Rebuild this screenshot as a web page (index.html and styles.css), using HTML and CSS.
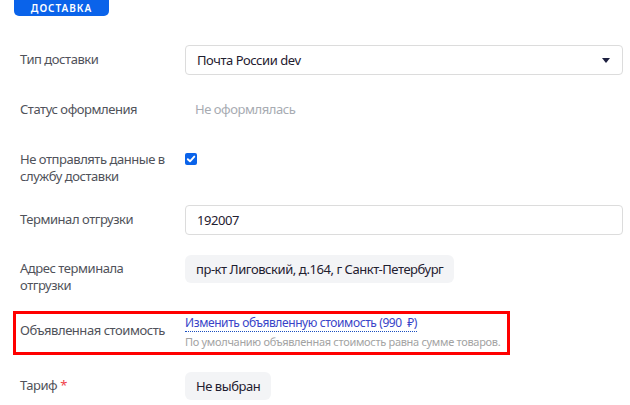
FILE: index.html
```html
<!DOCTYPE html>
<html>
  <head>
    <title>Доставка</title>
    <link rel="stylesheet" href="styles.css">
  </head>
  <body>
    <div class="badge">Доставка</div>

    <form class="delivery">
      <div class="row">
        <label class="label">Тип доставки</label>
        <div class="select">
          <span>Почта России dev</span>
          <span class="caret"></span>
        </div>
      </div>

      <div class="row">
        <label class="label">Статус оформления</label>
        <div class="value muted">Не оформлялась</div>
      </div>

      <div class="row">
        <label class="label">Не отправлять данные в службу доставки</label>
        <div class="value"><span class="check">
          <svg width="12" height="12" viewBox="0 0 12 12"><path d="M2.8 6.2 L5 8.3 L9.3 3.6" fill="none" stroke="#fff" stroke-width="1.9" stroke-linecap="round" stroke-linejoin="round"/></svg>
        </span></div>
      </div>

      <div class="row">
        <label class="label">Терминал отгрузки</label>
        <div class="input">192007</div>
      </div>

      <div class="row row-address">
        <label class="label label-tight">Адрес терминала отгрузки</label>
        <div><span class="chip">пр-кт Лиговский, д.164, г Санкт-Петербург</span></div>
      </div>

      <div class="row row-marked">
        <label class="label label-cost">Объявленная стоимость</label>
        <div>
          <a class="link" href="#">Изменить объявленную стоимость (990&nbsp; ₽)</a>
          <div class="hint">По умолчанию объявленная стоимость равна сумме товаров.</div>
        </div>
      </div>

      <div class="row row-tariff">
        <label class="label label-tight">Тариф <span class="req">*</span></label>
        <div><span class="chip">Не выбран</span></div>
      </div>
    </form>
  </body>
</html>
```

FILE: styles.css
```css
body {
  margin: 0;
  font-family: "Noto Sans", "Open Sans", sans-serif;
  font-size: 13px;
  line-height: 17px;
  letter-spacing: -0.45px;
  color: #1f2030;
  background: #ffffff;
}

.badge {
  margin-left: 14px;
  width: 95px;
  height: 16px;
  background-color: #0a63ea;
  border-radius: 0 0 5px 5px;
  color: #ffffff;
  font-size: 10px;
  line-height: 16px;
  font-weight: 600;
  letter-spacing: 1px;
  text-transform: uppercase;
  text-align: center;
}

.delivery {
  padding: 29px 7px 0 20px;
}

.row {
  display: grid;
  grid-template-columns: 165px 438px;
  min-height: 30px;
  margin-bottom: 20px;
}

.label {
  padding-top: 6px;
  padding-right: 12px;
  color: #50525a;
}

.label-tight {
  padding-top: 5px;
}

.value {
  padding-top: 6px;
}

.muted {
  color: #a7abb2;
  padding-left: 10px;
}

.select, .input {
  box-sizing: border-box;
  height: 30px;
  border: 1px solid #dcdcdc;
  border-radius: 4px;
  padding: 0 12px 0 11px;
  display: flex;
  align-items: center;
  justify-content: space-between;
}

.caret {
  width: 0;
  height: 0;
  border-left: 4px solid transparent;
  border-right: 4px solid transparent;
  border-top: 5px solid #1d2040;
}

.check {
  display: inline-flex;
  width: 12px;
  height: 12px;
  margin-top: 2px;
  background-color: #0a63ea;
  border-radius: 2px;
}

.chip {
  display: inline-block;
  height: 28px;
  line-height: 28px;
  padding: 0 11px;
  background-color: #f3f4f6;
  border-radius: 6px;
}

.row-address {
  margin-bottom: 17px;
}

.row-marked {
  box-sizing: border-box;
  margin-left: -7px;
  width: 497px;
  height: 44px;
  min-height: 0;
  border: 3px solid #ff0000;
  grid-template-columns: 165px 326px;
  padding: 0 0 0 4px;
  margin-bottom: 17px;
}

.label-cost {
  padding-top: 8px;
  white-space: nowrap;
}

.link {
  font-size: 12px;
  letter-spacing: -0.4px;
  color: #3844c8;
  text-decoration: none;
  border-bottom: 1px dotted #1a4fc0;
}

.hint {
  margin-top: 3px;
  font-size: 11px;
  line-height: 15px;
  letter-spacing: -0.3px;
  white-space: nowrap;
  color: #a3a3a3;
}

.req {
  color: #f0404a;
}
```
